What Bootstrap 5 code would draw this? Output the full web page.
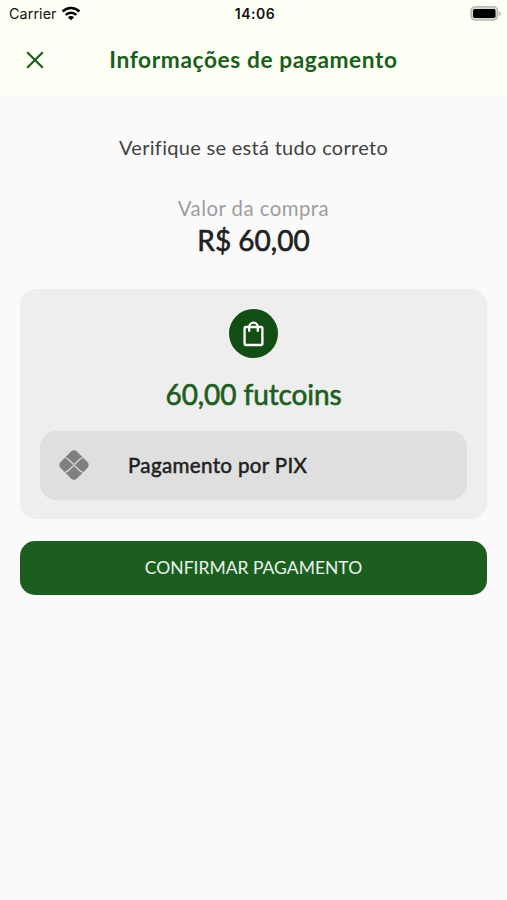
<!DOCTYPE html>
<html lang="pt-BR">
<head>
<meta charset="utf-8">
<meta name="viewport" content="width=device-width, initial-scale=1">
<title>Informações de pagamento</title>
<link href="https://cdn.jsdelivr.net/npm/bootstrap@5.3.0/dist/css/bootstrap.min.css" rel="stylesheet">
<style>
body{background:#fafafa;color:#212121;font-family:Lato,"Open Sans",sans-serif;min-height:900px}
.app-header{background:#fdfff5;height:96px}
.status-bar{height:27px;font-family:Inter,"Liberation Sans",sans-serif;color:#111;padding:0 6px 0 9px}
.carrier{font-size:14.3px;letter-spacing:.1px}
.clock{font-size:14px;font-weight:600;letter-spacing:.5px}
.title-bar{height:66px}
.close-btn{width:70px;color:#1b5e20}
.page-title{font-size:22.7px;font-weight:700;color:#1b5e20;letter-spacing:.6px}
.verify{font-size:20px;line-height:28px;color:#424242;margin-top:37px;letter-spacing:.3px}
.label-value{font-size:20.4px;line-height:28px;color:#9e9e9e;margin-top:33px;letter-spacing:.45px}
.amount{font-size:28px;line-height:36px;-webkit-text-stroke:.6px}
.summary{background:#eee;border-radius:16px;margin-top:31px;padding:20px 20px 19px}
.coin-icon{width:49px;height:49px;background:#124d14}
.coins{font-size:28px;line-height:36px;color:#1b5e20;margin:18px 0 19px;-webkit-text-stroke:.6px;letter-spacing:-.1px}
.method{background:#dfdfdf;border-radius:16px;height:69px;padding-left:19px}
.pix-icon{margin-bottom:2px}
.method-name{font-size:20.6px;line-height:28px;margin-left:39px;margin-bottom:2px;letter-spacing:.33px;-webkit-text-stroke:.5px}
.confirm{background:#1b5e20;color:#e9f3e9;border-radius:15px;height:54px;margin-top:22px;font-size:17.5px}
.confirm:hover{background:#174f1b;color:#fff}
</style>
</head>
<body>
<header class="app-header">
  <div class="status-bar row g-0 align-items-center">
    <div class="col d-flex align-items-center">
      <span class="carrier">Carrier</span>
      <svg class="ms-1" width="20" height="15" viewBox="0 0 20 15" fill="none" stroke="#000" stroke-width="2.6"><path d="M1.6 5.5a12 12 0 0 1 16.8 0M4.7 8.9a7.6 7.6 0 0 1 10.6 0"/><path d="M10 14.2 6.9 11.2a4.4 4.4 0 0 1 6.2 0z" fill="#000" stroke="none"/></svg>
    </div>
    <div class="col-auto clock">14:06</div>
    <div class="col d-flex justify-content-end">
      <svg width="31" height="15" viewBox="0 0 31 15"><rect x="1" y=".8" width="26.5" height="13.2" rx="4" fill="#d9dad2" stroke="#b9bab3" stroke-width="1.6"/><rect x="3" y="2.9" width="22.5" height="9.2" rx="1.8"/><path d="M28.8 5v5q2-1 2-2.5t-2-2.5z" fill="#b9bab3"/></svg>
    </div>
  </div>
  <div class="title-bar d-flex align-items-center">
    <button class="close-btn btn p-0 border-0 d-flex justify-content-center" aria-label="Fechar">
      <svg width="18" height="18" viewBox="0 0 18 18" stroke="currentColor" stroke-width="2.2"><path d="m1.2 1.2 15.6 15.6M16.8 1.2 1.2 16.8"/></svg>
    </button>
    <h1 class="page-title flex-grow-1 text-center mb-0">Informações de pagamento</h1>
    <div class="close-btn"></div>
  </div>
</header>
<main class="px-3 mx-1 text-center">
  <p class="verify mb-0">Verifique se está tudo correto</p>
  <p class="label-value mb-0">Valor da compra</p>
  <p class="amount mb-0">R$ 60,00</p>
  <section class="summary">
    <div class="coin-icon rounded-circle mx-auto d-flex align-items-center justify-content-center">
      <svg width="21" height="26" viewBox="0 0 21 26" fill="none" stroke="#fff" stroke-width="2.3" stroke-linejoin="round"><rect x="1.6" y="6" width="17.8" height="18" rx="1"/><path d="M6.2 10.8V6a4.3 4.3 0 0 1 8.6 0v4.8"/></svg>
    </div>
    <p class="coins">60,00 futcoins</p>
    <div class="method d-flex align-items-center">
      <svg class="pix-icon" width="30" height="30" viewBox="0 0 30 30"><rect x="3.4" y="3.4" width="23.2" height="23.2" rx="4.2" fill="#808080" transform="rotate(45 15 15)"/><path d="M6 8H7Q8.5 8.500 9.500 9.500L13.500 13.500Q15 15 16.500 13.500L20.500 9.500Q21.500 8.500 23 8H24M6 22H7Q8.500 21.500 9.500 20.500L13.500 16.500Q15 15 16.500 16.500L20.500 20.500Q21.500 21.500 23 22H24" fill="none" stroke="#dfdfdf" stroke-width="1.1"/></svg>
      <span class="method-name">Pagamento por PIX</span>
    </div>
  </section>
  <button class="confirm btn w-100 border-0 p-0">CONFIRMAR PAGAMENTO</button>
</main>
<script src="https://cdn.jsdelivr.net/npm/bootstrap@5.3.0/dist/js/bootstrap.bundle.min.js"></script>
</body>
</html>
